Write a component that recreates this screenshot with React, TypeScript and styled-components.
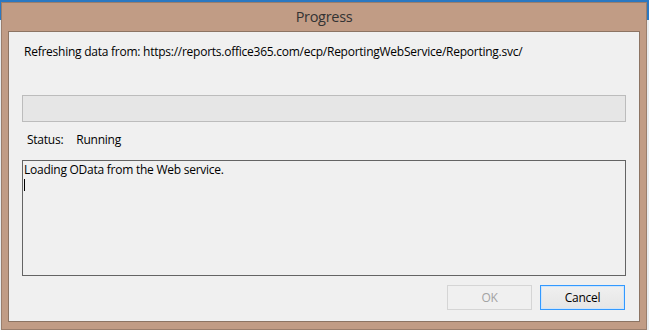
import React from 'react';
import styled, { createGlobalStyle } from 'styled-components';

const GlobalStyle = createGlobalStyle`
  html, body {
    margin: 0;
    padding: 0;
  }
  body {
    font-family: 'Open Sans', 'Noto Sans', sans-serif;
    background: #e8ecef;
  }
`;

const Desktop = styled.div`
  width: 649px;
  height: 330px;
  box-sizing: border-box;
  padding: 2px 0 0 1px;
  overflow: hidden;
  background: linear-gradient(#2a78c2 0 20px, #e8ecef 20px);
`;

const Window = styled.div`
  width: 646px;
  height: 328px;
  box-sizing: border-box;
  border: 1px solid #9a7e6c;
  background: #c19c85;
  padding: 0 6px 7px;
  display: flex;
  flex-direction: column;
`;

const TitleBar = styled.div`
  height: 28px;
  display: flex;
  align-items: center;
  justify-content: center;
  padding-bottom: 2px;
  box-sizing: border-box;
  font-size: 14.5px;
  letter-spacing: -0.3px;
  color: #333;
`;

const Client = styled.div`
  flex: 1;
  border: 1px solid #8c7463;
  background: #f0f0f0;
  padding: 12px 13px 10px 11px;
  display: flex;
  flex-direction: column;
  font-size: 12px;
  letter-spacing: -0.25px;
  color: #000;
`;

const Line = styled.div<{ indent?: number }>`
  line-height: 16px;
  padding-left: ${(p) => p.indent ?? 0}px;
  white-space: nowrap;
`;

const ProgressBar = styled.div`
  margin: 35px 0 0 2px;
  height: 27px;
  box-sizing: border-box;
  border: 1px solid #bcbcbc;
  background: #e6e6e6;
`;

const StatusRow = styled.div`
  margin-top: 10px;
  padding-left: 7px;
  display: flex;
  gap: 13px;
  line-height: 16px;
`;

const OutputBox = styled.div`
  margin: 12px 0 0 2px;
  height: 116px;
  box-sizing: border-box;
  border: 1px solid #646464;
  background: #f0f0f0;
  padding: 1px 1px;
  line-height: 16px;
`;

const Caret = styled.span`
  display: block;
  width: 1px;
  height: 12px;
  margin-top: 1px;
  background: #000;
`;

const ButtonRow = styled.div`
  margin-top: 9px;
  display: flex;
  justify-content: flex-end;
  gap: 8px;
  padding-right: 1px;
`;

const Button = styled.button<{ primary?: boolean }>`
  width: 85px;
  height: 25px;
  box-sizing: border-box;
  font-family: inherit;
  font-size: 12px;
  letter-spacing: -0.25px;
  padding: 0;
  border: 1px solid ${(p) => (p.primary ? '#3399ff' : '#d5d5d5')};
  background: ${(p) => (p.primary ? 'linear-gradient(#f0f0f0, #e5e5e5)' : '#f0f0f0')};
  color: ${(p) => (p.primary ? '#000' : '#a3a3a3')};
  box-shadow: ${(p) => (p.primary ? 'inset 0 0 0 1px #cfe5fa' : 'none')};
`;

export default function App() {
  return (
    <Desktop>
      <GlobalStyle />
      <Window>
        <TitleBar>Progress</TitleBar>
        <Client>
          <Line indent={4}>
            Refreshing data from: https://reports.office365.com/ecp/ReportingWebService/Reporting.svc/
          </Line>
          <ProgressBar />
          <StatusRow>
            <span>Status:</span>
            <span>Running</span>
          </StatusRow>
          <OutputBox>
            Loading OData from the Web service.
            <Caret />
          </OutputBox>
          <ButtonRow>
            <Button disabled>OK</Button>
            <Button primary>Cancel</Button>
          </ButtonRow>
        </Client>
      </Window>
    </Desktop>
  );
}
